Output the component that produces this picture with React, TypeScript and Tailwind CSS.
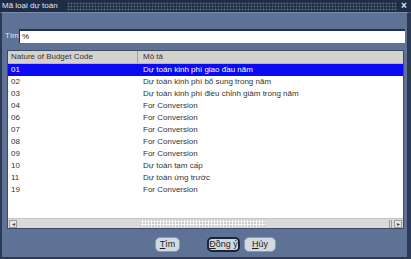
import React from 'react';

const rows = [
  { code: '01', desc: 'Dự toán kinh phí giao đầu năm' },
  { code: '02', desc: 'Dự toán kinh phí bổ sung trong năm' },
  { code: '03', desc: 'Dự toán kinh phí điều chỉnh giảm trong năm' },
  { code: '04', desc: 'For Conversion' },
  { code: '06', desc: 'For Conversion' },
  { code: '07', desc: 'For Conversion' },
  { code: '08', desc: 'For Conversion' },
  { code: '09', desc: 'For Conversion' },
  { code: '10', desc: 'Dự toán tạm cấp' },
  { code: '11', desc: 'Dự toán ứng trước' },
  { code: '19', desc: 'For Conversion' },
];

function Btn({ first, rest, primary }: { first: string; rest: string; primary?: boolean }) {
  return (
    <button
      className={`w-full h-[15px] rounded-[5px] bg-[#d2d9e1] text-[#1e1e1e] text-[9px] leading-none flex items-center justify-center ${
        primary ? 'border-2 border-[#1b2336]' : 'border border-[#8b99b1]'
      }`}
    >
      <span>
        <span className="underline">{first}</span>
        {rest}
      </span>
    </button>
  );
}

export default function App() {
  return (
    <div className="w-[411px] h-[259px] flex flex-col bg-[#2a3853] font-['Liberation_Sans',Arial,sans-serif] text-[8px] overflow-hidden">
      {/* title bar */}
      <div className="h-[12px] flex items-center bg-[#1f2c46] text-[#e3e8f1]">
        <span className="pl-[2px] pr-[9px] leading-none">Mã loại dự toán</span>
        <div className="flex-1 h-[9px] bg-[radial-gradient(circle,#56667f_0.9px,transparent_1.1px)] bg-[length:3px_3px]" />
        <span className="w-[14px] text-center text-[10px] font-bold leading-none">×</span>
      </div>

      <div className="flex-1 flex flex-col bg-[#5e7296] border-l-2 border-r-4 border-b-2 border-[#2b3954] border-t border-t-[#7a8cab]">
        {/* search row */}
        <div className="flex items-center mt-[16px] h-[14px]">
          <span className="ml-[3px] w-[14px] text-[#dfe5ee]">Tìm</span>
          <div className="w-[386px] h-[14px] bg-white border-t-2 border-l border-[#27324a] flex items-center pl-[2px] text-[#222]">
            %
          </div>
        </div>

        {/* table */}
        <div className="ml-[5px] mt-[7px] w-[397px] h-[179px] border border-[#3d4b66] bg-white flex flex-col text-[#333]">
          <div className="h-[13px] grid grid-cols-[130px_1fr] bg-[#d5d2cc] border-b border-[#b9b6b0] items-center">
            <div className="pl-[3px] border-r border-[#a3a09a] h-full flex items-center">Nature of Budget Code</div>
            <div className="pl-[5px]">Mô tả</div>
          </div>
          <div className="flex-1 flex flex-col">
            {rows.map((r, i) => (
              <div
                key={r.code}
                className={`h-[12px] grid grid-cols-[130px_1fr] items-center ${
                  i === 0 ? 'bg-[#0a0af5] text-white' : ''
                }`}
              >
                <div className="pl-[3px]">{r.code}</div>
                <div className="pl-[5px]">{r.desc}</div>
              </div>
            ))}
          </div>
          {/* horizontal scrollbar */}
          <div className="h-[10px] bg-[#d9d9d9] border-t border-[#c4c4c4] flex items-center">
            <div className="w-[8px] h-[8px] ml-[1px] border border-[#9a9a9a] bg-[#e6e6e6] flex items-center justify-center text-[6px] text-[#444] leading-none">◂</div>
            <div className="w-[124px]" />
            <div className="w-[124px] h-[7px] bg-[#cbcbcb] bg-[radial-gradient(circle,#f6f6f6_1px,transparent_1.2px)] bg-[length:3px_3px]" />
            <div className="flex-1" />
            <div className="w-[3px] h-[8px] border-l border-r border-[#9a9a9a] mr-[2px]" />
            <div className="w-[8px] h-[8px] mr-[1px] border border-[#9a9a9a] bg-[#e6e6e6] flex items-center justify-center text-[6px] text-[#444] leading-none">▸</div>
          </div>
        </div>

        {/* buttons */}
        <div className="flex mt-[8px] ml-[153px]">
          <div className="w-[25px]">
            <Btn first="T" rest="ìm" />
          </div>
          <div className="w-[33px] ml-[27px]">
            <Btn first="Đ" rest="ồng ý" primary />
          </div>
          <div className="w-[32px] ml-[4px]">
            <Btn first="H" rest="ủy" />
          </div>
        </div>
      </div>
    </div>
  );
}
